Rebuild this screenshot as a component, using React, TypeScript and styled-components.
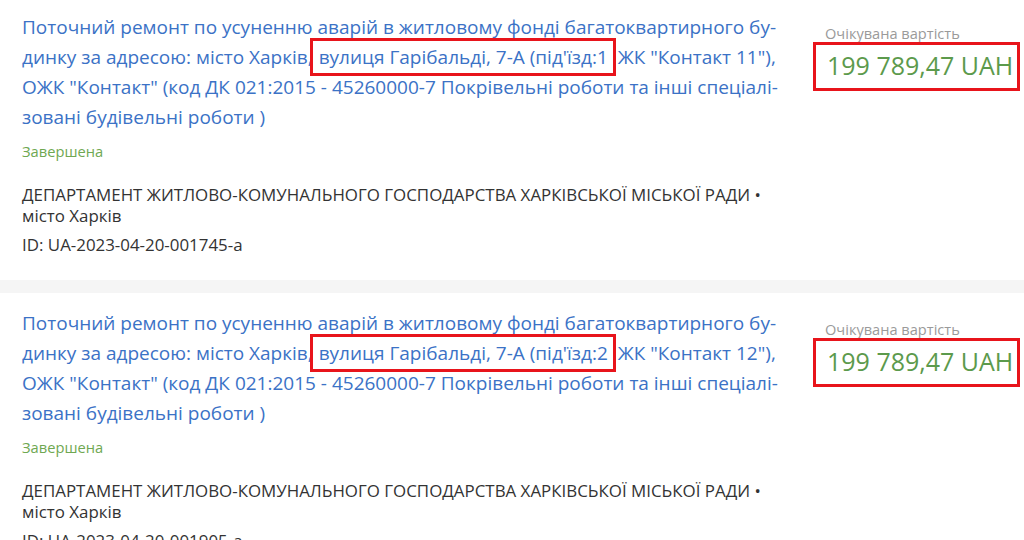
import styled, { createGlobalStyle } from 'styled-components';

const GlobalStyle = createGlobalStyle`
  html, body {
    margin: 0;
    padding: 0;
    background: #ffffff;
  }
  body {
    font-family: 'Open Sans', 'Noto Sans', sans-serif;
    overflow: hidden;
  }
`;

const List = styled.div`
  display: flex;
  flex-direction: column;
  gap: 13px;
  margin-top: -3px;
  background: #f5f5f5;
`;

const Card = styled.div`
  display: grid;
  grid-template-columns: 756px 1fr;
  column-gap: 47px;
  padding: 15px 0 25px 22px;
  background: #ffffff;
`;

const Main = styled.div`
  display: flex;
  flex-direction: column;
`;

const Title = styled.a`
  font-size: 19px;
  line-height: 30px;
  color: #3b72c6;
  text-decoration: none;
  hyphens: manual;
`;

// red annotation frame, does not move the text
const Mark = styled.span`
  outline: 3px solid #e8141b;
  outline-offset: 0;
  padding: 3px 5px 3px 6px;
`;

const Status = styled.div`
  margin-top: 9px;
  font-size: 14.7px;
  line-height: 20px;
  color: #6fa852;
`;

const Org = styled.div`
  margin-top: 23px;
  font-size: 16.9px;
  line-height: 21px;
  color: #333333;
`;

const Id = styled.div`
  margin-top: 8px;
  font-size: 16.9px;
  line-height: 21px;
  color: #333333;
`;

const Aside = styled.div`
  display: flex;
  flex-direction: column;
  align-items: flex-start;
  padding-top: 11px;
`;

const Label = styled.div`
  font-size: 14.6px;
  line-height: 20px;
  color: #9a9a9a;
`;

const Price = styled.div<{ $marked?: boolean }>`
  margin-top: -1px;
  margin-left: -12px;
  padding: 4px 4px 7px 11px;
  font-size: 25px;
  line-height: 32px;
  color: #5c9a4c;
  border: 3px solid ${(p) => (p.$marked ? '#e8141b' : 'transparent')};
`;

type Tender = {
  entrance: string;
  contact: string;
  id: string;
};

const tenders: Tender[] = [
  { entrance: '1', contact: 'Контакт 11', id: 'UA-2023-04-20-001745-a' },
  { entrance: '2', contact: 'Контакт 12', id: 'UA-2023-04-20-001905-a' },
];

const TenderCard = ({ t }: { t: Tender }) => (
  <Card>
    <Main>
      <Title href="#">
        Поточний ремонт по усуненню аварій в житловому фонді багатоквартирного бу{'\u00AD'}динку за адресою: місто Харків,
        <Mark>вулиця Гарібальді, 7-А (під'їзд:{t.entrance}</Mark> ЖК "{t.contact}"), ОЖК "Контакт" (код ДК 021:2015 -
        45260000-7 Покрівельні роботи та інші спеціалі{'\u00AD'}зовані будівельні роботи )
      </Title>
      <Status>Завершена</Status>
      <Org>ДЕПАРТАМЕНТ ЖИТЛОВО-КОМУНАЛЬНОГО ГОСПОДАРСТВА ХАРКІВСЬКОЇ МІСЬКОЇ РАДИ • місто Харків</Org>
      <Id>ID: {t.id}</Id>
    </Main>
    <Aside>
      <Label>Очікувана вартість</Label>
      <Price $marked>199 789,47 UAH</Price>
    </Aside>
  </Card>
);

export default function App() {
  return (
    <>
      <GlobalStyle />
      <List>
        {tenders.map((t) => (
          <TenderCard key={t.id} t={t} />
        ))}
      </List>
    </>
  );
}
